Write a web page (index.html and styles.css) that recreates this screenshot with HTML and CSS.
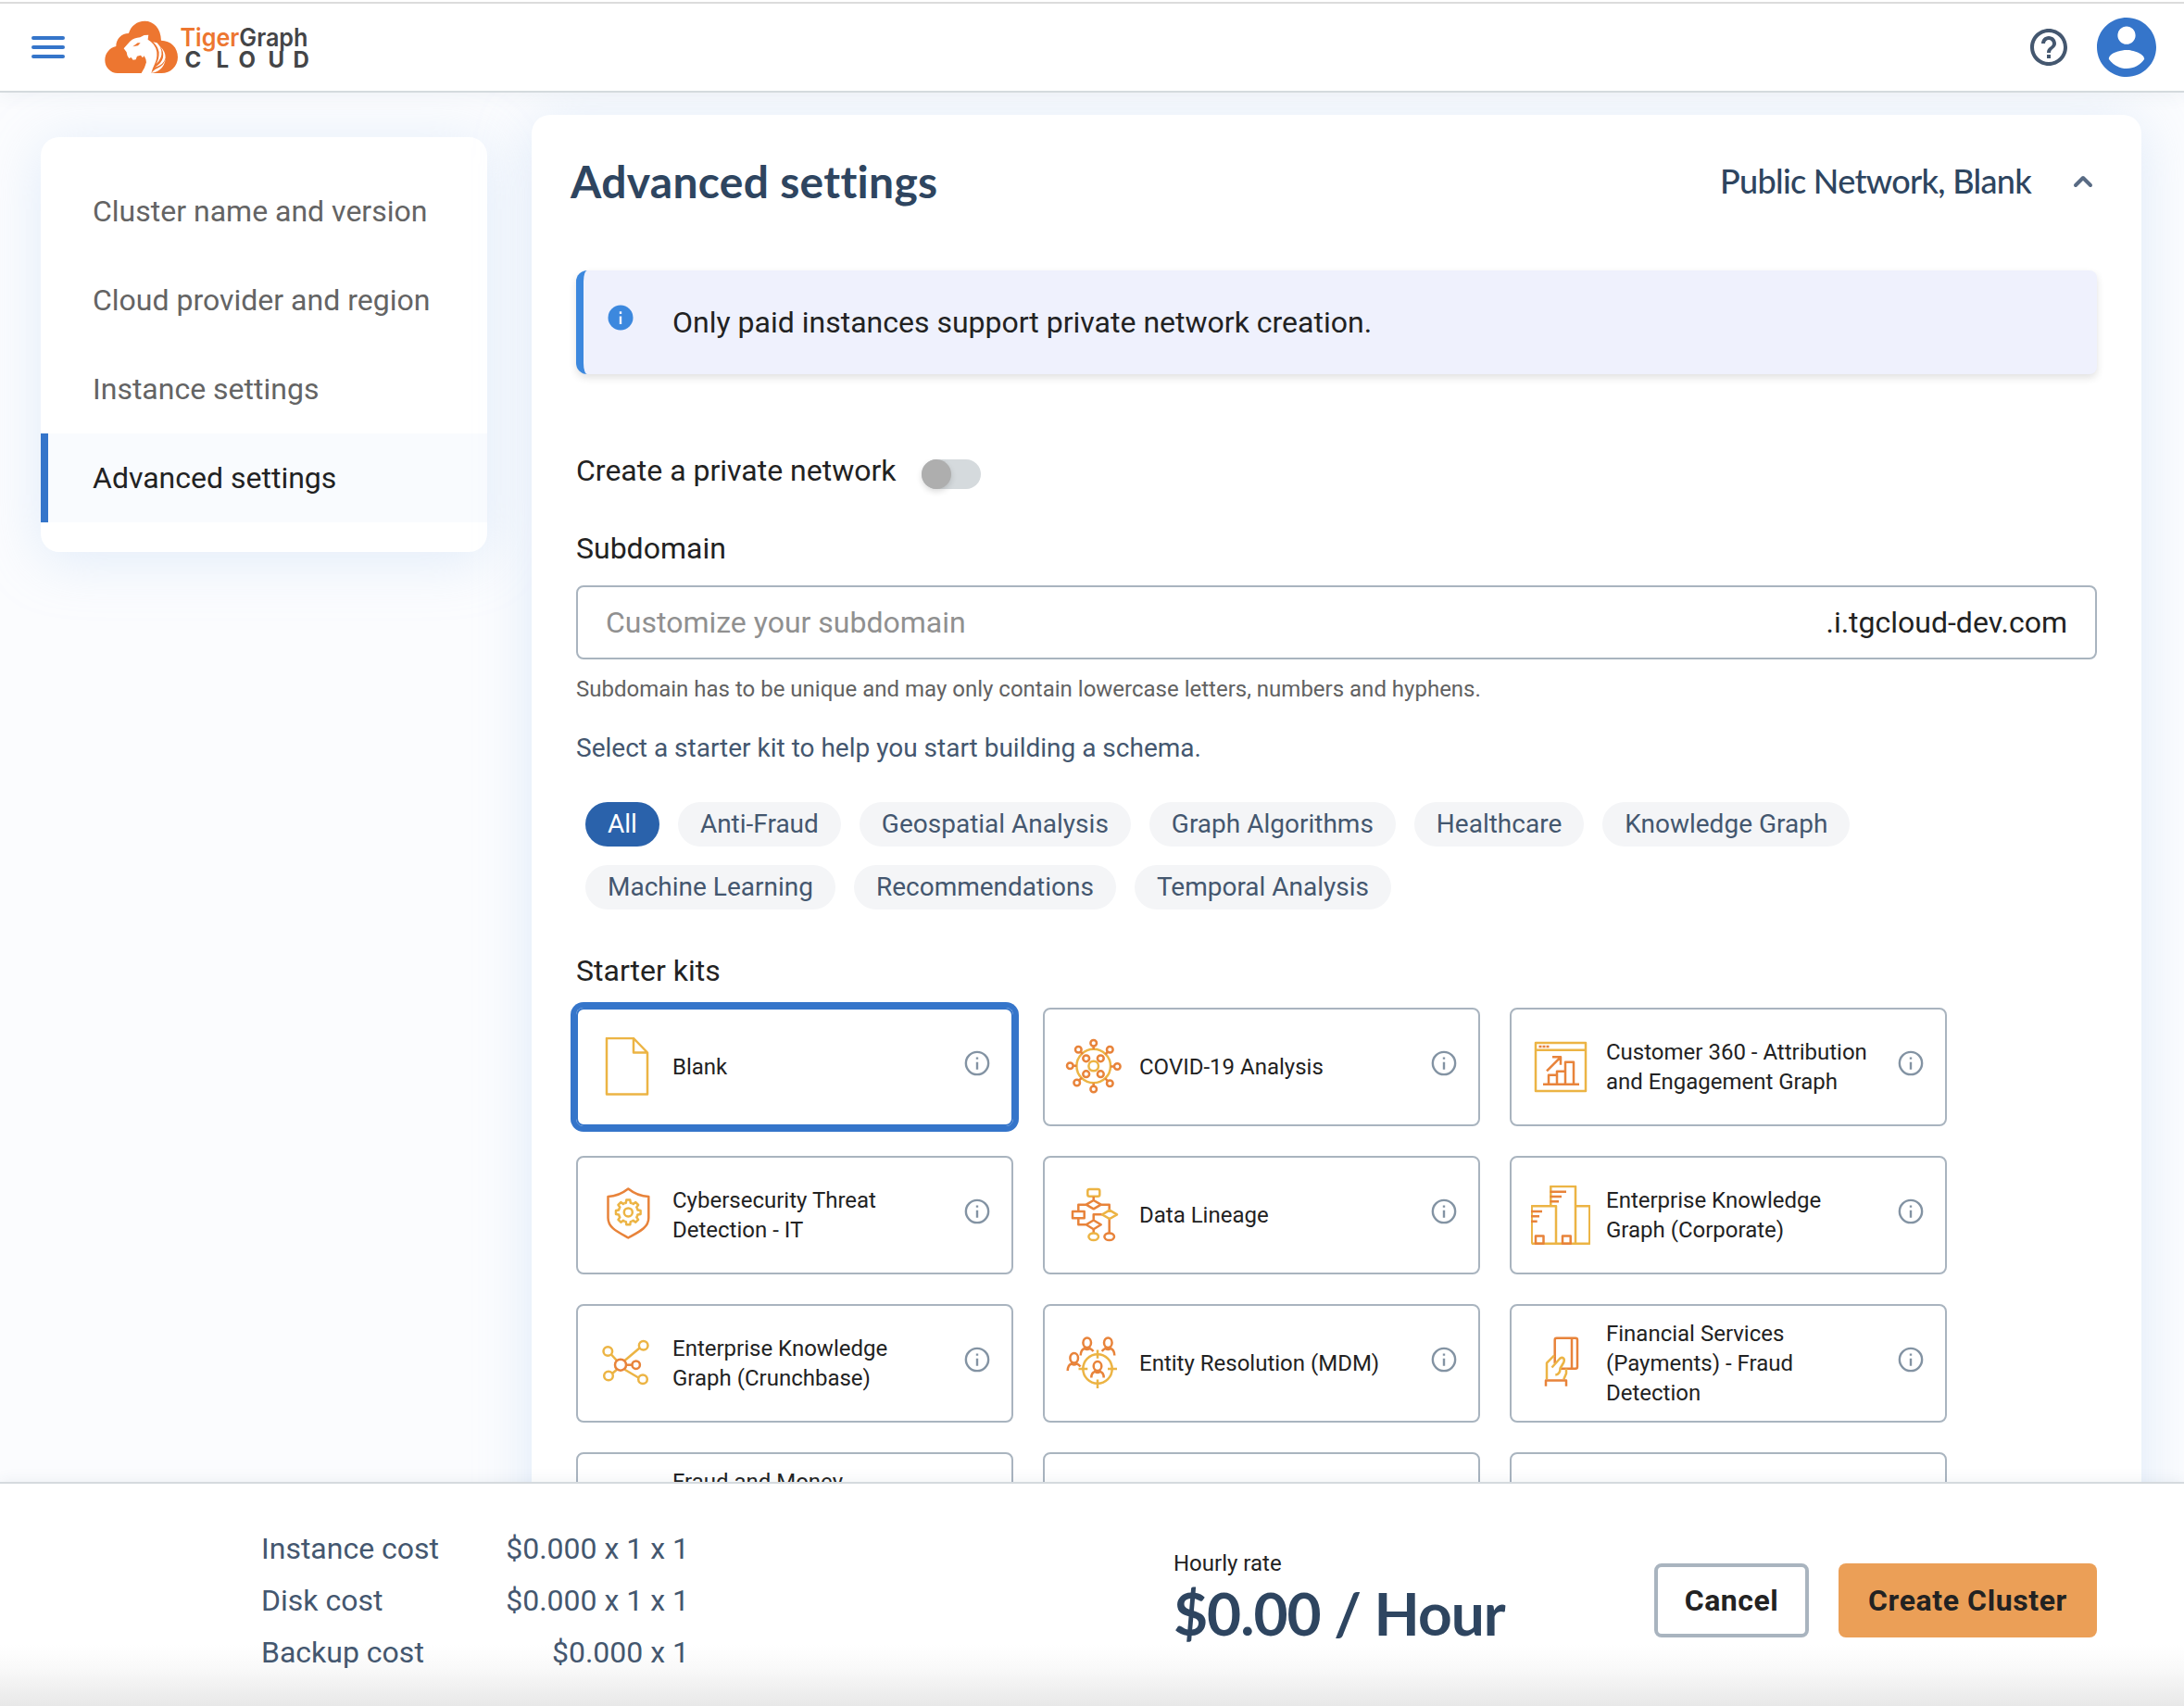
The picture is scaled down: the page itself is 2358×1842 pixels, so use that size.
FILE: index.html
```html
<!DOCTYPE html>
<html lang="en">
<head>
<meta charset="utf-8">
<title>TigerGraph Cloud - Create Cluster</title>
<link rel="stylesheet" href="styles.css">
</head>
<body>
<svg class="defs" aria-hidden="true">
  <symbol id="info" viewBox="0 0 24 24"><circle cx="12" cy="12" r="9.1" fill="none" stroke="currentColor" stroke-width="1.8"/><path fill="currentColor" d="M11.1 11h1.8v6h-1.8zM11.1 7.1h1.8v1.8h-1.8z"/></symbol>
</svg>
<div class="app">
  <header class="topbar">
    <svg class="menu" viewBox="0 0 36 24"><path d="M2 2h32M2 12h32M2 22h32"/></svg>
    <svg class="logo" viewBox="0 0 222 58">
      <g transform="translate(0.3 0.7) scale(.3333) translate(-70 -68)">
        <path fill="#ed7630" d="M111 237C88 237 70 218 70 195C70 172 86 154 106 150C106 126 124 108 147 108C154 84 174 68 199 68C228 68 251 91 252 131C284 132 306 154 306 185C306 214 283 237 253 237Z"/>
        <path fill="#fff" d="M131 157L151 134Q165 122 184 121L197 114L211 113L209 128Q234 142 238 168Q240 190 231 208Q224 222 220 237H188Q200 220 204 202Q204 192 197 181L192 187L186 179L174 182L170 193L161 194L155 186L148 189Q141 182 140 169Z"/>
        <path fill="#ed7630" d="M160 151L176 139H185L177 148Z"/>
        <path fill="#fff" d="M226 136Q242 151 245 169Q246 192 236 207Q257 187 253 164Q249 148 239 139ZM247 149Q262 165 258 187Q253 206 232 218Q262 210 266 187Q267 166 247 149ZM268 178Q268 205 248 217Q230 224 219 237Q266 231 268 178Z"/>
      </g>
      <text class="brand" x="81.500" y="28.3" textLength="138" lengthAdjust="spacingAndGlyphs"><tspan fill="#ed7630">Tiger</tspan><tspan>Graph</tspan></text>
      <text class="cloud" y="51" x="86.500 120.500 144.500 176.500 203.500">CLOUD</text>
    </svg>
    <svg class="help" viewBox="0 0 24 24"><path d="M11 18h2v-2h-2v2zm1-16C6.480 2 2 6.480 2 12s4.480 10 10 10 10-4.480 10-10S17.520 2 12 2zm0 18c-4.410 0-8-3.590-8-8s3.590-8 8-8 8 3.590 8 8-3.590 8-8 8zm0-14c-2.210 0-4 1.790-4 4h2c0-1.100.9-2 2-2s2 .9 2 2c0 2-3 1.750-3 5h2c0-2.250 3-2.500 3-5 0-2.210-1.790-4-4-4z"/></svg>
    <svg class="avatar" viewBox="2 2 20 20"><path d="M12 2C6.480 2 2 6.480 2 12s4.480 10 10 10 10-4.480 10-10S17.520 2 12 2zm0 3c1.660 0 3 1.340 3 3s-1.340 3-3 3-3-1.340-3-3 1.340-3 3-3zm0 14.200c-2.500 0-4.710-1.280-6-3.220.03-1.990 4-3.080 6-3.080 1.990 0 5.970 1.090 6 3.080-1.290 1.940-3.500 3.220-6 3.220z"/></svg>
  </header>

  <div class="body">
    <nav class="steps">
      <a class="step">Cluster name and version</a>
      <a class="step">Cloud provider and region</a>
      <a class="step">Instance settings</a>
      <a class="step active">Advanced settings</a>
    </nav>

    <main class="panel">
      <div class="panel-head">
        <h1>Advanced settings</h1>
        <span class="summary">Public Network, Blank</span>
        <svg class="chevron" viewBox="0 0 20 12"><path d="M2 10l8-8 8 8"/></svg>
      </div>

      <div class="notice">
        <svg class="notice-icon" viewBox="0 0 32 32"><circle cx="16" cy="16" r="13.500" fill="#3c88de"/><path fill="#eff1fd" d="M14.800 14.500h2.400v8.500h-2.400zM14.800 9.300h2.400v2.600h-2.400z"/></svg>
        <span>Only paid instances support private network creation.</span>
      </div>

      <div class="toggle-row"><span>Create a private network</span><span class="switch"><span class="thumb"></span></span></div>

      <label class="label sub">Subdomain</label>
      <div class="field"><span class="placeholder">Customize your subdomain</span><span>.i.tgcloud-dev.com</span></div>
      <p class="helper">Subdomain has to be unique and may only contain lowercase letters, numbers and hyphens.</p>
      <p class="prompt">Select a starter kit to help you start building a schema.</p>

      <div class="chips">
        <span class="chip on">All</span><span class="chip">Anti-Fraud</span><span class="chip">Geospatial Analysis</span><span class="chip">Graph Algorithms</span><span class="chip">Healthcare</span><span class="chip">Knowledge Graph</span><span class="chip">Machine Learning</span><span class="chip">Recommendations</span><span class="chip">Temporal Analysis</span>
      </div>

      <div class="label kits-label">Starter kits</div>
      <div class="kits">
        <div class="kit selected">
          <svg class="art" viewBox="0 0 64 64"><path class="y" d="M10 1H39L54 16.500V61.500H10ZM39 1V16.500H54"/></svg>
          <span class="name">Blank</span><svg class="info"><use href="#info"/></svg>
        </div>
        <div class="kit">
          <svg class="art" viewBox="0 0 64 64">
            <circle class="y" cx="31.700" cy="31" r="18.300"/><circle class="y" cx="31.700" cy="31" r="5.300"/>
            <g class="o"><circle cx="23.700" cy="22.800" r="3.400"/><circle cx="39.300" cy="22.800" r="3.400"/><circle cx="23.700" cy="39.700" r="3.400"/><circle cx="39.300" cy="39.700" r="3.400"/>
            <circle cx="31.700" cy="6.300" r="3.300"/><circle cx="49.300" cy="13.300" r="3.300"/><circle cx="57.300" cy="31.500" r="3.300"/><circle cx="49.300" cy="49.800" r="3.300"/><circle cx="31.700" cy="56" r="3.300"/><circle cx="13.700" cy="49" r="3.300"/><circle cx="6.300" cy="30.800" r="3.300"/><circle cx="15.300" cy="13.300" r="3.300"/>
            <path d="M31.700 9.600V13M47 15.700L44.500 18.300M54 31.500H50M47 47.400L44.300 44.300M31.700 52.700V49.500M16 46.600L19 43.600M9.600 30.800H13.400M17.700 15.700L20 18"/></g>
          </svg>
          <span class="name">COVID-19 Analysis</span><svg class="info"><use href="#info"/></svg>
        </div>
        <div class="kit">
          <svg class="art" viewBox="0 0 64 64"><path class="y" d="M5 6H59V58H5ZM5 13.700H59"/><path class="o" d="M8.500 10H19.500" stroke-dasharray="3 1"/><path class="o" d="M13 50.700H52M19 50.700V40.700H28V50.700M28 40.700V36.700H37V50.700M37 36.700V26.700H46V50.700M17 36.300L32 21.300M23 21.300H32V29.700"/></svg>
          <span class="name">Customer 360 - Attribution and Engagement Graph</span><svg class="info"><use href="#info"/></svg>
        </div>
        <div class="kit">
          <svg class="art" viewBox="0 0 64 64"><path class="o" d="M33.300 3.500C27 8.500 20 11.700 11.500 12V35C11.500 45.500 21.500 50 33.300 56.500C45 50 55.300 45.500 55.300 35V12C46.500 11.700 39.500 8.500 33.300 3.500Z"/>
            <g transform="translate(33.300 28.900)" class="y"><circle r="4.500"/><path id="tooth" d="M-4.100 -9.700A10.500 10.500 0 0 1 -2.500 -10.200L-2 -13.300H2L2.500 -10.200A10.500 10.500 0 0 1 4.100 -9.700"/><use href="#tooth" transform="rotate(45)"/><use href="#tooth" transform="rotate(90)"/><use href="#tooth" transform="rotate(135)"/><use href="#tooth" transform="rotate(180)"/><use href="#tooth" transform="rotate(225)"/><use href="#tooth" transform="rotate(270)"/><use href="#tooth" transform="rotate(315)"/></g></svg>
          <span class="name">Cybersecurity Threat Detection - IT</span><svg class="info"><use href="#info"/></svg>
        </div>
        <div class="kit">
          <svg class="art" viewBox="0 0 64 64"><rect class="y" x="25.300" y="4" width="13" height="7.700" rx="2"/><path class="o" d="M31.700 12V16L39.700 20.700L31.700 25.300L23.700 20.700L31.700 16M23.700 20.700H15.300V28M9 28H21.700V35.300H9ZM15.300 35.300V42.300H23.700L31.700 37.500L39.700 42.300L31.700 47.200L23.700 42.300M31.700 37.500V31.300H41M39.700 20.700H48.700V26.500M48.700 36V51.300M31.700 47.200V51.300"/><path class="y" d="M41 31.300L49 26.700L57 31.300L49 36Z"/><ellipse class="y" cx="31.700" cy="55.300" rx="5.300" ry="3.800"/><ellipse class="o" cx="48.700" cy="55.300" rx="5.300" ry="3.800"/></svg>
          <span class="name">Data Lineage</span><svg class="info"><use href="#info"/></svg>
        </div>
        <div class="kit">
          <svg class="art" viewBox="0 0 64 64"><path class="y" d="M.7 62.700V22.300H27V62.700M21.300 22.300V1H48V62.700M48 22.300H63.300V62.700H.7"/><path class="o" d="M20.500 6.700H38M20.500 12H33M20.500 17.300H30M0 28H12M0 33.300H9M0 38.700H6.700M5 54.500H13.500V62.700H5ZM34 54.500H42.700V62.700H34Z"/></svg>
          <span class="name">Enterprise Knowledge Graph (Corporate)</span><svg class="info"><use href="#info"/></svg>
        </div>
        <div class="kit">
          <svg class="art" viewBox="0 0 64 64"><g class="y"><path d="M15 22.500L21 29.200M45.500 15.500L29.500 29M16.300 42.800L21 38.700M44.300 47.500L29.500 38.700"/><circle cx="11.300" cy="19" r="4.800"/><circle cx="49.700" cy="12.700" r="4.800"/><circle cx="12" cy="45.500" r="4.800"/><circle cx="49" cy="49.300" r="4.800"/></g><g class="o"><circle cx="25" cy="33.700" r="6"/><circle cx="41.700" cy="33.700" r="4.200"/><path d="M31 33.700H37.500"/></g></svg>
          <span class="name">Enterprise Knowledge Graph (Crunchbase)</span><svg class="info"><use href="#info"/></svg>
        </div>
        <div class="kit">
          <svg class="art" viewBox="0 0 64 64"><g class="y"><circle cx="36" cy="38" r="15.700"/><path d="M36 17.500V26.700M36 49.500V59M15.500 38H25.300M47 38H57"/></g>
            <g class="o"><g id="person"><ellipse cx="24.700" cy="9.800" rx="4.300" ry="5.300"/><path d="M22 14.500V16Q18 17 17.700 23.500M27.300 14.500V16Q29.500 16.500 31.500 19"/></g><path d="M22 16Q24.700 18 27.300 16"/>
            <ellipse cx="47.300" cy="9.800" rx="4.300" ry="5.300"/><path d="M50 14.500V16Q54 17 54.300 23.500M44.700 14.500V16Q42.500 16.500 40.700 19M44.700 16Q47.300 18 50 16"/>
            <use href="#person" transform="translate(-14 16.500)"/><path d="M8 32.500Q10.700 34.500 13.300 32.500"/>
            <ellipse cx="36" cy="35" rx="4.300" ry="5"/><path d="M33.300 39.500V41Q29.300 42 29.300 47.500M38.700 39.500V41Q42.700 42 42.700 47.500M33.300 41Q36 43 38.700 41"/></g></svg>
          <span class="name">Entity Resolution (MDM)</span><svg class="info"><use href="#info"/></svg>
        </div>
        <div class="kit">
          <svg class="art" viewBox="0 0 64 64"><path class="o" d="M25.700 32V6.700Q25.700 4.700 27.700 4.700H48Q50 4.700 50 6.700V35.700Q50 37.700 48 37.700H32M44 4.700V37.700"/><path class="y" d="M17 49.300V31.700L25 23.500M22.500 36.500L31 27Q33 25 35 26.500Q36.500 28 35.300 31L31.500 37.500Q31.500 44 26.300 44.500M38 37.700V43L35.300 49.300"/><path class="o" d="M16 56.700V50.500H38V56.700"/></svg>
          <span class="name">Financial Services (Payments) - Fraud Detection</span><svg class="info"><use href="#info"/></svg>
        </div>
        <div class="kit"><span class="art"></span><span class="name">Fraud and Money Laundering Detection (Fin. Services)</span></div>
        <div class="kit"></div>
        <div class="kit"></div>
      </div>
    </main>
  </div>

  <footer class="bottom">
    <dl class="costs">
      <dt>Instance cost</dt><dd>$0.000 x 1 x 1</dd>
      <dt>Disk cost</dt><dd>$0.000 x 1 x 1</dd>
      <dt>Backup cost</dt><dd>$0.000 x 1</dd>
    </dl>
    <div class="rate"><span class="rate-label">Hourly rate</span><span class="rate-value">$0.00 / Hour</span></div>
    <div class="actions"><button class="btn cancel">Cancel</button><button class="btn create">Create Cluster</button></div>
  </footer>
</div>
</body>
</html>
```

FILE: styles.css
```css
* { box-sizing: border-box; }
body { margin: 0; font-family: Roboto, "Liberation Sans", sans-serif; font-size: 32px; line-height: 40px; color: #222; background: #fbfcfe; }
h1, p, dl, dd { margin: 0; }
.defs { display: none; }
.app { display: grid; grid-template-rows: 100px 1500px 242px; width: 2358px; height: 1842px; overflow: hidden; }

.topbar { display: flex; align-items: center; padding: 4px 30px 0 34px; background: linear-gradient(#fff 2px, #dcdcdc 2px 4px, #fff 4px); border-bottom: 2px solid #d4dadd; box-shadow: 0 2px 20px rgba(60, 80, 110, .07); z-index: 2; }
.menu { width: 36px; height: 24px; overflow: visible; }
.menu path { stroke: #3575ca; stroke-width: 4; stroke-linecap: round; }
.logo { width: 222px; height: 58px; margin-left: 43px; overflow: visible; }
.brand { font: 600 26.5px Inter, sans-serif; fill: #444547; }
.cloud { font: 700 24px Inter, sans-serif; fill: #444547; }
.help { width: 48px; height: 48px; margin-left: auto; fill: #44576f; }
.avatar { width: 64px; height: 64px; margin-left: 28px; fill: #3575ca; }

.body { display: flex; align-items: flex-start; gap: 48px; padding: 0 46px 0 44px; overflow: hidden; }
.steps { width: 482px; margin-top: 48px; padding: 32px 0; background: #fff; border-radius: 20px; box-shadow: 0 8px 60px rgba(180, 208, 240, .36); }
.step { display: flex; align-items: center; height: 96px; padding-left: 56px; color: #646464; }
.step.active { padding-left: 48px; border-left: 8px solid #3575ca; background: #f9fbfe; color: #222; }

.panel { width: 1738px; margin-top: 24px; padding: 0 48px 40px; background: #fff; border-radius: 20px; box-shadow: 0 8px 60px rgba(180, 208, 240, .4); }
.panel-head { display: flex; align-items: center; height: 142px; margin: 0 5px 26px -6px; color: #2e4560; font-family: Lato, sans-serif; }
h1 { margin-top: 2px; font-size: 48px; line-height: 58px; font-weight: 700; letter-spacing: .3px; }
.summary { margin-left: auto; font-size: 36px; font-weight: 500; letter-spacing: -.7px; }
.chevron { width: 20px; height: 12px; margin: 2px 0 0 46px; overflow: visible; }
.chevron path { fill: none; stroke: #596b84; stroke-width: 4; stroke-linecap: round; stroke-linejoin: round; }

.notice { display: flex; align-items: center; height: 112px; padding-left: 24px; border-left: 8px solid #3c88de; border-radius: 12px 8px 8px 12px; background: #eff1fd; box-shadow: 0 4px 8px rgba(0, 0, 0, .12); }
.notice-icon { width: 32px; height: 32px; margin: 0 40px 10px 0; }
.toggle-row { display: flex; margin-top: 84px; height: 40px; }
.switch { width: 64px; height: 32px; margin: 8px 0 0 27px; border-radius: 16px; background: #d5dadd; }
.thumb { display: block; width: 32px; height: 32px; border-radius: 50%; background: #aeaeae; box-shadow: 0 3px 6px rgba(0, 0, 0, .14); }
.label { display: block; }
.sub { margin-top: 44px; }
.field { display: flex; align-items: center; justify-content: space-between; height: 80px; margin-top: 20px; padding: 0 30px; border: 2px solid #a9b4bf; border-radius: 8px; }
.placeholder { color: #909090; }
.helper { margin-top: 16px; font-size: 24px; line-height: 32px; color: #626262; }
.prompt { margin-top: 28px; font-size: 28px; color: #44576f; }
.chips { display: flex; flex-wrap: wrap; gap: 20px; margin: 38px 0 0 10px; }
.chip { height: 48px; padding: 0 24px; border-radius: 24px; background: #f4f5f7; color: #44576f; font-size: 28px; line-height: 47px; }
.chip.on { background: #2a62ab; color: #fff; }
.kits-label { margin-top: 46px; }
.kits { display: grid; grid-template-columns: repeat(3, 472px); grid-auto-rows: 128px; gap: 32px; margin-top: 20px; }
.kit { display: flex; align-items: center; padding-left: 21px; border: 2px solid #a9b4bf; border-radius: 8px; }
.kit.selected { border-color: #3575ca; box-shadow: 0 0 0 6px #3575ca; }
.art { flex: none; width: 64px; height: 64px; margin-right: 17px; }
.y, .o { fill: none; stroke-width: 2.5; stroke-linejoin: round; }
.y { stroke: #ecb444; }
.o { stroke: #e8833a; }
.name { width: 296px; padding-right: 10px; font-size: 24px; line-height: 32px; }
.info { flex: none; width: 32px; height: 32px; margin: 0 0 8px 17px; color: #8393a3; }

.bottom { display: flex; align-items: flex-start; padding-left: 282px; border-top: 2px solid #d5dade; background: linear-gradient(#fff 174px, #f9f9f9 200px, #e8e8e8 240px); box-shadow: 0 -2px 14px rgba(60, 80, 110, .07); z-index: 2; }
.costs { display: grid; grid-template-columns: 200px 262px; row-gap: 16px; margin-top: 50px; color: #44576f; white-space: nowrap; }
.costs dd { text-align: right; }
.rate { display: flex; flex-direction: column; width: 519px; margin: 70px 0 0 523px; }
.rate-label { font-size: 24px; line-height: 32px; }
.rate-value { font: 700 64px/76px Lato, sans-serif; letter-spacing: -1px; color: #2e4560; }
.actions { display: flex; gap: 32px; margin-top: 86px; }
.btn { width: 279px; height: 80px; padding: 0; border: 0; border-radius: 8px; font: 700 32px Roboto, sans-serif; letter-spacing: .6px; color: #222; white-space: nowrap; }
.cancel { width: 167px; border: 4px solid #a9b4bf; background: #fff; letter-spacing: .5px; }
.create { background: #eb9f57; }
```
